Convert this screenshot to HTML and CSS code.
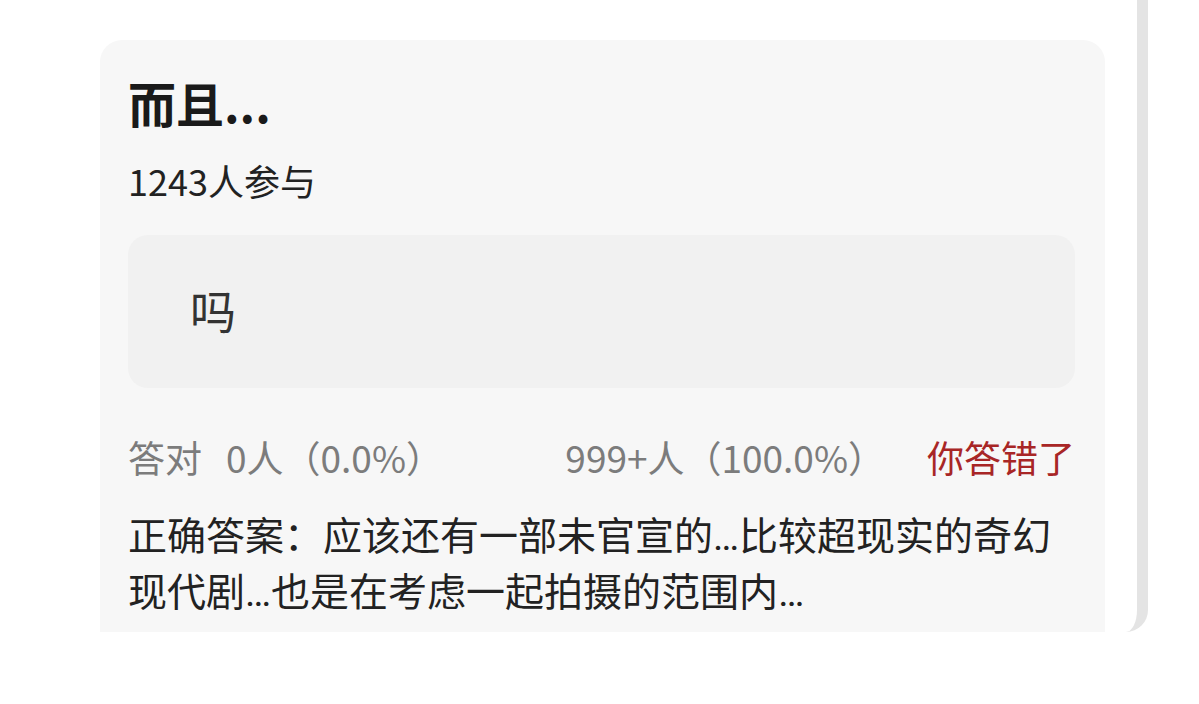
FILE: index.html
```html
<!DOCTYPE html>
<html lang="zh-CN">
<head>
  <meta charset="UTF-8">
  <meta name="viewport" content="width=device-width, initial-scale=1">
  <title>而且...</title>
  <link rel="stylesheet" href="styles.css">
</head>
<body>
  <div class="frame">
    <div class="card">
      <h1 class="title">而且...</h1>
      <div class="count">1243人参与</div>
      <div class="option">
        <span class="option-text">吗</span>
      </div>
      <div class="stats">
        <span class="stat"><span class="stat-label">答对</span>0人（0.0%）</span>
        <span class="stat stat-wrong">999+人（100.0%）</span>
        <span class="verdict">你答错了</span>
      </div>
      <p class="answer">正确答案：应该还有一部未官宣的<span class="ell">…</span>比较超现实的奇幻现代剧<span class="ell">…</span>也是在考虑一起拍摄的范围内<span class="ell">…</span></p>
    </div>
  </div>
</body>
</html>
```

FILE: styles.css
```css
/* 答题卡片 */
body {
  margin: 0;
  background-color: #ffffff;
  font-family: "Noto Sans CJK SC", "Noto Sans", sans-serif;
  overflow: hidden;
}
.frame {
  width: 1005px;
  height: 592px;
  padding: 40px 32px 0 100px;
  border-right: 11px solid #e4e4e4;
  border-bottom-right-radius: 22px;
}
.card {
  height: 598px;
  padding: 0 30px 0 28px;
  background-color: #f7f7f7;
  border-radius: 22px 22px 0 0;
  overflow: hidden;
}
.title {
  margin: 0;
  padding-top: 38px;
  font-size: 48px;
  line-height: 48px;
  font-weight: bold;
  color: #1a1a1a;
}
.count {
  margin-top: 36px;
  font-size: 36px;
  line-height: 36px;
  color: #222;
}
.option {
  display: flex;
  align-items: center;
  height: 153px;
  margin-top: 37px;
  padding-left: 62px;
  background-color: #f1f1f1;
  border-radius: 20px;
}
.option-text {
  font-size: 46px;
  line-height: 46px;
  color: #333;
  margin-top: -6px;
}
.stats {
  display: flex;
  margin-top: 51px;
  font-size: 37px;
  line-height: 37px;
  color: #7c7c7c;
}
.stat-label {
  margin-right: 24px;
}
.stat-wrong {
  margin-left: auto;
}
.verdict {
  margin-left: 42px;
  color: #a82626;
}
.answer {
  margin: 31px 0 0;
  font-size: 39px;
  line-height: 52px;
  color: #222;
}
.ell {
  font-family: Roboto, "Noto Sans", sans-serif;
}
```
